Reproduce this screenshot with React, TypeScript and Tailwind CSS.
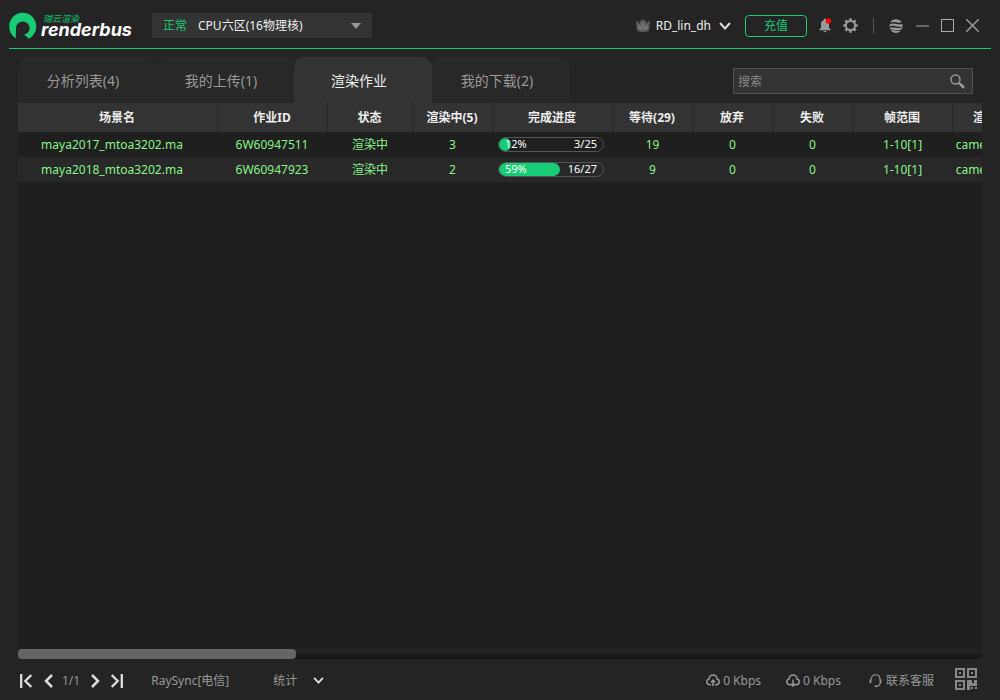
import React, { useState } from 'react';

const tabs = [
  { id: 'analysis', label: '分析列表(4)' },
  { id: 'upload', label: '我的上传(1)' },
  { id: 'render', label: '渲染作业' },
  { id: 'download', label: '我的下载(2)' },
];

const columns = [
  { label: '场景名', width: 'w-[200px]' },
  { label: '作业ID', width: 'w-[110px]' },
  { label: '状态', width: 'w-[85px]' },
  { label: '渲染中(5)', width: 'w-[80px]' },
  { label: '完成进度', width: 'w-[120px]' },
  { label: '等待(29)', width: 'w-[80px]' },
  { label: '放弃', width: 'w-[80px]' },
  { label: '失败', width: 'w-[80px]' },
  { label: '帧范围', width: 'w-[100px]' },
  { label: '渲染相机', width: 'w-[90px]' },
];

const jobs = [
  { scene: 'maya2017_mtoa3202.ma', id: '6W60947511', status: '渲染中', running: 3, percent: 12, done: '3/25', waiting: 19, dropped: 0, failed: 0, frames: '1-10[1]', camera: 'cameraShape1' },
  { scene: 'maya2018_mtoa3202.ma', id: '6W60947923', status: '渲染中', running: 2, percent: 59, done: '16/27', waiting: 9, dropped: 0, failed: 0, frames: '1-10[1]', camera: 'cameraShape1' },
];

const Logo = () => (
  <div className="flex w-[143px] shrink-0 items-center">
    <svg className="h-[28px] w-[28px] shrink-0" viewBox="0 0 28 28" fill="#17cc75">
      <path d="M6.800 26.200C2.800 24 .2 19.500 .2 14.500 .2 6.800 6.200 .8 13.700 .8S27.300 6.800 27.300 14.500C27.300 19.500 24.300 24 19.800 26.800L15 22.600C18.500 21.800 20.600 19.300 20.600 16.200 20.600 12.400 17.600 9.400 13.800 9.400S7 12.400 7 16.200Z" />
    </svg>
    <div className="ml-1 flex flex-col">
      <span className="ml-[2px] text-[9px] leading-[9px] font-medium text-[#17a867] italic">瑞云渲染</span>
      <span className="font-['Inter',sans-serif] text-[18px] leading-[14px] font-bold text-white italic">renderbus</span>
    </div>
  </div>
);

const CrownIcon = () => (
  <svg className="h-[15px] w-[14px]" viewBox="0 0 14 15">
    <path d="M0 3.500L1.500 3 3.500 6 4 2.500 5.500 3 7 .5 8.500 3 10 2.500 10.500 6 12.500 3 14 3.500 13 12.500Q7 15.500 1 12.500Z" fill="#5c5c5c" />
    <path d="M2 7L4.500 8.500 7 4 9.500 8.500 12 7 11.500 11Q7 12.500 2.500 11Z" fill="#777" />
    <path d="M5.500 7L7 10.500 8.500 7" fill="none" stroke="#5c5c5c" />
  </svg>
);

const Chevron = ({ className, stroke = '#e0e0e0' }: { className: string; stroke?: string }) => (
  <svg className={className} viewBox="0 0 12 8" fill="none" stroke={stroke} strokeWidth="2">
    <path d="M1 1L6 6.500 11 1" />
  </svg>
);

const BellIcon = () => (
  <svg className="h-[15px] w-[14px]" viewBox="0 0 14 15">
    <path d="M6 .8H8V2C10 2.500 11 4 11 6V9.500L13 12.300H1L3 9.500V6C3 4 4 2.500 6 2Z" fill="#999" />
    <path d="M5 13H9L7 14.500Z" fill="#999" />
    <circle cx="10.500" cy="3" r="2.700" fill="#f00" />
  </svg>
);

const GearIcon = () => (
  <svg className="h-[15px] w-[15px]" viewBox="0 0 15 15" fill="none" stroke="#999">
    <circle cx="7.500" cy="7.500" r="4.600" strokeWidth="2" />
    <path d="M7.500 .3V2.500M7.500 12.500V14.700M.3 7.500H2.500M12.500 7.500H14.700M2.400 2.400L4 4M11 11L12.600 12.600M2.400 12.600L4 11M11 4L12.600 2.400" strokeWidth="2.600" />
  </svg>
);

// three wavy bands of a sphere
const GlobeIcon = () => (
  <svg className="h-[14px] w-[14px]" viewBox="0 0 14 14" fill="#999">
    <path d="M1.200 3.500C2.500 1.300 4.500 .3 7 .3 9.500 .3 11.500 1.300 12.700 3.300 10.500 4 9 3.600 7 3.200 5 2.800 3 2.700 1.200 3.500Z" />
    <path d="M.3 7.600C0 5.600 1.800 4.300 4.500 4.500 7.500 4.800 10 6 13.300 5 13.900 6 13.900 7.200 13 7.800 9.500 8.600 7 7 4 6.800 2.500 6.700 1.300 6.900 .3 7.600Z" />
    <path d="M.7 8.800C4 7.900 6.500 8.700 9 9 11 9.200 12.500 8.700 13.600 7.800 13.600 9.700 12 11.300 9.800 11.300 6.500 11.300 4.300 10 1.200 10.600Z" />
    <path d="M1.800 11.500C4.500 11 6.500 12 9 12.100 10 12.100 10.800 12 11.800 11.800 10.500 13.300 9 13.900 7 13.900 5 13.900 3.200 13.200 1.800 11.500Z" />
  </svg>
);

const SearchIcon = () => (
  <svg className="h-[15px] w-[15px]" viewBox="0 0 15 15" fill="none" stroke="#999">
    <circle cx="5.500" cy="5.500" r="4.500" strokeWidth="1.400" />
    <path d="M8.700 8.700L10 10" strokeWidth="1.500" />
    <path d="M9.800 9.800L14 13.800" strokeWidth="2.800" />
  </svg>
);

const CloudIcon = ({ down = false }: { down?: boolean }) => (
  <svg className="h-[13px] w-[14px]" viewBox="0 0 14 13" fill="none" stroke="#999" strokeWidth="1.500">
    <path d="M5 10.700H4C2 10.700 .8 9.400 .8 7.800S2 5.200 3 5C3.200 2.500 5 1 7 1S10.800 2.500 11 5C12.200 5.200 13.200 6.300 13.200 7.800S12 10.700 10 10.700H9" />
    <path d={down ? 'M7 5.500V12M5 9.800L7 12 9 9.800' : 'M7 12V6M5 8.200L7 6 9 8.200'} />
  </svg>
);

const HeadsetIcon = () => (
  <svg className="h-[14px] w-[13px]" viewBox="0 0 13 14" fill="none" stroke="#999" strokeWidth="1.100">
    <path d="M2 6V5.500C2 2.500 4 .8 6.500 .8S11 2.500 11 5.500V6M11.500 9C10.500 11.500 9 12.300 7.500 12.300" />
    <path d="M1.500 5.500V9M11.500 5.500V9" strokeWidth="1.800" />
    <path d="M5.500 12.300H8" strokeWidth="1.500" />
  </svg>
);

const QrIcon = () => (
  <svg className="h-[22px] w-[22px]" viewBox="0 0 22 22" fill="none" stroke="#888" strokeWidth="2">
    <path d="M1 1H9V9H1ZM13 1H21V9H13ZM1 13H9V21H1Z" />
    <path d="M4 4H6V6H4ZM16 4H18V6H16ZM4 16H6V18H4ZM12 12H17V15H19V12H22V18H15V22H12ZM16 19H18V21H16ZM20 19H22V21H20Z" fill="#888" stroke="none" />
  </svg>
);

const Progress = ({ percent, done }: { percent: number; done: string }) => (
  <div className="relative mx-auto flex h-[15px] w-[106px] items-center justify-between overflow-hidden rounded-full border border-[#555] px-[6px] text-[11px] text-white">
    <div className="absolute inset-y-0 left-0 rounded-full bg-[#17cc75]" style={{ width: `${percent}%` }} />
    <span className="relative">{percent}%</span>
    <span className="relative">{done}</span>
  </div>
);

const App = () => {
  const [active, setActive] = useState('render');
  const [query, setQuery] = useState('');

  return (
    <div className="flex h-screen flex-col overflow-hidden bg-[#242424] font-['Noto_Sans','Noto_Sans_CJK_SC',sans-serif] text-xs text-[#999]">
      <header className="mx-[9px] flex h-[49px] shrink-0 items-center border-b border-[#17cc75] pt-[3px]">
        <Logo />
        <div className="relative flex h-[25px] w-[220px] items-center bg-[#333]">
          <label htmlFor="zone" className="pl-[11px] text-[#17cc75]">正常</label>
          <select id="zone" className="ml-[11px] h-full flex-1 appearance-none bg-transparent text-[#eee] outline-none">
            <option>CPU六区(16物理核)</option>
          </select>
          <svg className="pointer-events-none absolute right-[11px] h-[6px] w-[10px]" viewBox="0 0 10 6" fill="#999">
            <path d="M0 0H10L5 6Z" />
          </svg>
        </div>
        <div className="ml-auto flex items-center">
          <button className="flex items-center text-[#eee]">
            <CrownIcon />
            <span className="ml-[6px]">RD_lin_dh</span>
            <Chevron className="ml-2 h-[8px] w-[12px]" stroke="#ddd" />
          </button>
          <button className="ml-[14px] h-[22px] w-[62px] rounded border border-[#17cc75] text-[#17cc75]">充值</button>
          <button aria-label="消息" className="ml-[11px]"><BellIcon /></button>
          <button aria-label="设置" className="ml-[11px]"><GearIcon /></button>
          <span className="mx-[15px] h-4 w-px bg-[#555]" />
          <button aria-label="主题"><GlobeIcon /></button>
          <button aria-label="最小化" className="ml-[13px] h-[2px] w-[13px] bg-[#666]" />
          <button aria-label="最大化" className="ml-3 h-[13px] w-[13px] border border-[#aaa]" />
          <button aria-label="关闭" className="mr-3 ml-3">
            <svg className="h-[13px] w-[13px]" viewBox="0 0 13 13" stroke="#999" strokeWidth="1.500">
              <path d="M0 0L13 13M13 0L0 13" />
            </svg>
          </button>
        </div>
      </header>

      <main className="mx-[18px] flex min-h-0 flex-1 flex-col pt-2">
        <div className="flex h-[46px] shrink-0 items-center">
          <nav className="flex h-full text-sm">
            {tabs.map((tab) => (
              <button
                key={tab.id}
                onClick={() => setActive(tab.id)}
                className={`h-full w-[138px] rounded-t-[10px] pt-[2px] pr-2 ${active === tab.id ? 'bg-[#333] text-[#eee]' : 'bg-[#282828] text-[#999]'}`}
              >
                {tab.label}
              </button>
            ))}
          </nav>
          <label className="mt-[2px] mr-[9px] ml-auto flex h-[26px] w-[240px] items-center border border-[#505050] bg-[#333] px-1">
            <input
              value={query}
              onChange={(e) => setQuery(e.target.value)}
              placeholder="搜索"
              aria-label="搜索"
              className="min-w-0 flex-1 bg-transparent pt-[2px] text-xs outline-none placeholder:text-[#888]"
            />
            <span className="mr-[3px]"><SearchIcon /></span>
          </label>
        </div>

        <div className="min-h-0 flex-1 overflow-hidden bg-[#1f1f1f]">
          <table className="w-[1025px] table-fixed border-separate border-spacing-0 text-center">
            <thead>
              <tr className="h-[29px] bg-[#333] text-[#eee]">
                {columns.map((col) => (
                  <th key={col.label} className={`${col.width} border-r border-[#262626] p-0 pr-px font-bold`}>{col.label}</th>
                ))}
              </tr>
            </thead>
            <tbody className="text-[#88f488]">
              {jobs.map((job) => (
                <tr key={job.id} className="h-[25px] even:bg-[#282828] [&>td]:py-0 [&>td]:pl-0">
                  <td className="pr-3">{job.scene}</td>
                  <td className="pr-[2px]">{job.id}</td>
                  <td className="pr-px">{job.status}</td>
                  <td className="pr-px">{job.running}</td>
                  <td className="pr-1"><Progress percent={job.percent} done={job.done} /></td>
                  <td className="pr-px">{job.waiting}</td>
                  <td className="pr-px">{job.dropped}</td>
                  <td className="pr-px">{job.failed}</td>
                  <td className="pr-px">{job.frames}</td>
                  <td className="pr-px">{job.camera}</td>
                </tr>
              ))}
            </tbody>
          </table>
        </div>

        <div className="h-[10px] shrink-0 rounded-full bg-linear-to-b from-[#262626] to-[#141414]">
          <div className="h-full w-[278px] rounded-[4px] bg-[#666]" />
        </div>
      </main>

      <footer className="mx-[18px] flex h-[41px] shrink-0 items-center pt-[2px]">
        <button aria-label="首页" className="ml-[2px]">
          <svg className="h-[14px] w-[12px]" viewBox="0 0 12 14" fill="none" stroke="#ddd" strokeWidth="2.300">
            <path d="M1.200 0V14M11.300 1L5.300 7 11.300 13" />
          </svg>
        </button>
        <button aria-label="上一页" className="ml-3">
          <svg className="h-[14px] w-[9px]" viewBox="0 0 9 14" fill="none" stroke="#ddd" strokeWidth="2.500">
            <path d="M8 1L2 7 8 13" />
          </svg>
        </button>
        <span className="ml-[9px]">1/1</span>
        <button aria-label="下一页" className="ml-[11px]">
          <svg className="h-[14px] w-[9px]" viewBox="0 0 9 14" fill="none" stroke="#ddd" strokeWidth="2.500">
            <path d="M1 1L7 7 1 13" />
          </svg>
        </button>
        <button aria-label="末页" className="ml-[11px]">
          <svg className="h-[14px] w-[12px]" viewBox="0 0 12 14" fill="none" stroke="#ddd" strokeWidth="2.300">
            <path d="M10.800 0V14M.7 1L6.700 7 .7 13" />
          </svg>
        </button>
        <span className="ml-[28px]">RaySync[电信]</span>
        <button className="ml-[44px] flex items-center">
          统计
          <Chevron className="ml-4 h-[7px] w-[11px]" />
        </button>
        <div className="ml-auto flex items-center">
          <span className="flex items-center gap-[3px]"><CloudIcon />0 Kbps</span>
          <span className="ml-[25px] flex items-center gap-[3px]"><CloudIcon down />0 Kbps</span>
          <a href="#support" className="ml-[28px] flex items-center gap-1"><HeadsetIcon />联系客服</a>
          <button aria-label="二维码" className="mr-[5px] ml-[21px] pb-[3px]"><QrIcon /></button>
        </div>
      </footer>
    </div>
  );
};

export default App;
